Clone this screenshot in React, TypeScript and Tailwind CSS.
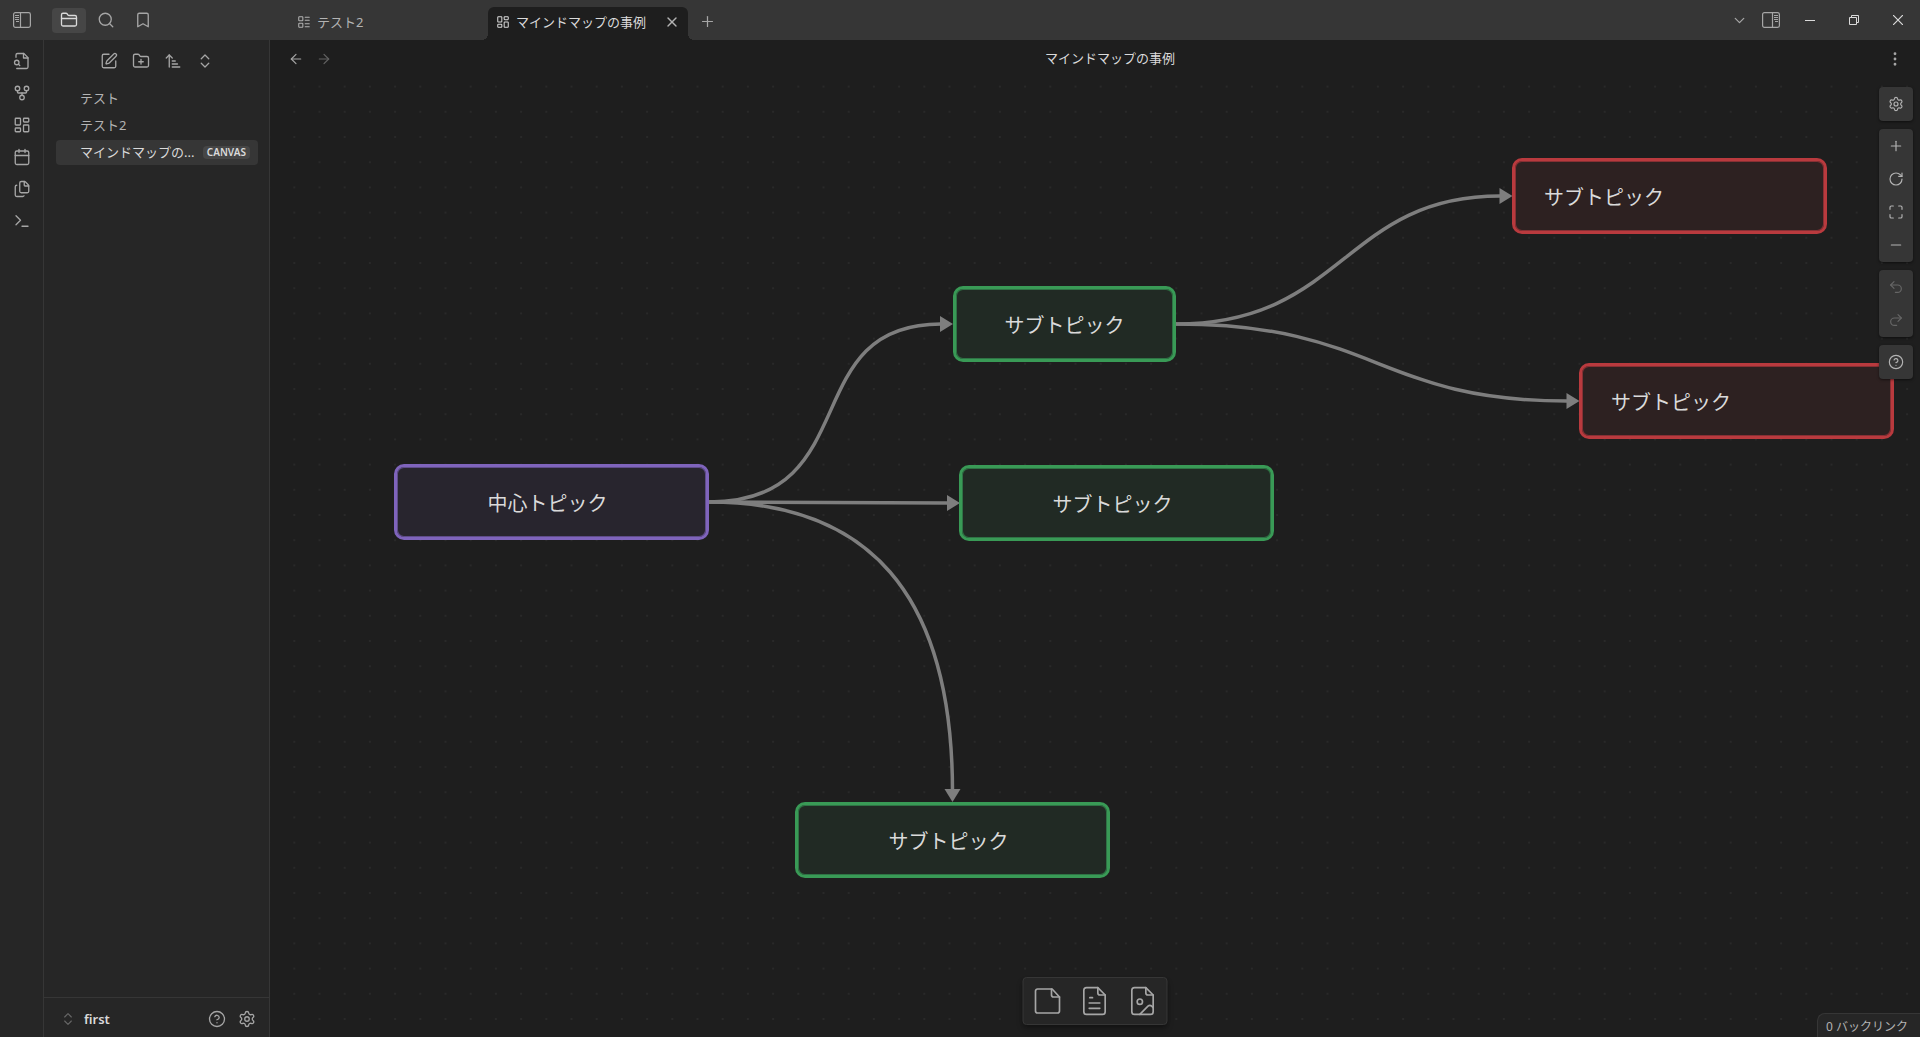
import React from "react";
import {
  ArrowLeft,
  ArrowRight,
  ArrowUpNarrowWide,
  Bookmark,
  Calendar,
  ChevronDown,
  ChevronsUpDown,
  CircleHelp,
  EllipsisVertical,
  Files,
  FolderClosed,
  FolderPlus,
  GitFork,
  LayoutDashboard,
  LayoutList,
  Maximize,
  Minus,
  Plus,
  Redo2,
  RotateCw,
  Search,
  Settings,
  SquarePen,
  Terminal,
  Undo2,
  X,
} from "lucide-react";

const Icon: React.FC<{
  size?: number;
  stroke?: number;
  children: React.ReactNode;
}> = ({ size = 18, stroke = 1.75, children }) => (
  <svg
    width={size}
    height={size}
    viewBox="0 0 24 24"
    fill="none"
    stroke="currentColor"
    strokeWidth={stroke}
    strokeLinecap="round"
    strokeLinejoin="round"
  >
    {children}
  </svg>
);

const SidebarIcon: React.FC<{ side: "left" | "right" }> = ({ side }) => (
  <svg
    width="18"
    height="16"
    viewBox="0 0 18 16"
    fill="none"
    stroke="currentColor"
    strokeWidth="1.2"
  >
    <rect x="0.6" y="0.6" width="16.8" height="14.8" rx="1.8" />
    {side === "left" ? (
      <path d="M7.5 1v14M2 3.5h4M2 5.5h4M2 7.5h4M3 9.5h3" />
    ) : (
      <path d="M10.5 1v14M12 3.5h4M12 5.5h4M12 7.5h4M13 9.5h3" />
    )}
  </svg>
);

const FileSearchIcon = () => (
  <Icon>
    <path d="M4 7V4a2 2 0 0 1 2-2h8.5L20 7.5V20a2 2 0 0 1-2 2H5" />
    <path d="M14 2v6h6" />
    <circle cx="5" cy="14" r="3" />
    <path d="m9 18-1.5-1.5" />
  </Icon>
);

const IconButton: React.FC<{
  label: string;
  className?: string;
  children: React.ReactNode;
}> = ({ label, className = "", children }) => (
  <button
    type="button"
    aria-label={label}
    className={`flex items-center justify-center ${className}`}
  >
    {children}
  </button>
);

const TitleBar = () => (
  <header className="flex h-10 shrink-0 bg-[#363636] text-[#a6a6a6]">
    <div className="flex w-[270px] shrink-0 items-center">
      <IconButton label="サイドバー" className="w-11">
        <SidebarIcon side="left" />
      </IconButton>
      <div className="flex items-center gap-[3px] pl-2">
        <IconButton
          label="ファイル"
          className="h-[25px] w-[34px] rounded bg-[#464646] text-[#dadada]"
        >
          <FolderClosed size={18} strokeWidth={1.75} />
        </IconButton>
        <IconButton label="検索" className="h-[25px] w-[34px]">
          <Search size={18} strokeWidth={1.75} />
        </IconButton>
        <IconButton label="ブックマーク" className="h-[25px] w-[34px]">
          <Bookmark size={18} strokeWidth={1.75} />
        </IconButton>
      </div>
    </div>
    <div className="flex flex-1 items-end">
      <div className="flex h-[33px] w-[218px] items-center gap-1.5 pr-3 pb-1 pl-[27px] text-[#b3b3b3]">
        <LayoutList size={14} strokeWidth={1.75} />
        <span>テスト2</span>
      </div>
      <div className="relative flex h-[33px] w-[200px] items-center gap-1.5 rounded-t-md bg-[#1e1e1e] pr-2 pb-1 pl-2 text-[#dadada]">
        <LayoutDashboard size={14} strokeWidth={1.75} />
        <span className="flex-1 whitespace-nowrap">マインドマップの事例</span>
        <IconButton label="閉じる" className="text-[#b3b3b3]">
          <X size={16} strokeWidth={2} />
        </IconButton>
        <span className="absolute bottom-0 -left-1.5 size-1.5 bg-[radial-gradient(circle_at_0_0,#363636_6px,#1e1e1e_6px)]" />
        <span className="absolute -right-1.5 bottom-0 size-1.5 bg-[radial-gradient(circle_at_100%_0,#363636_6px,#1e1e1e_6px)]" />
      </div>
      <IconButton label="新しいタブ" className="ml-1 h-[38px] w-[30px]">
        <Plus size={17} strokeWidth={1.75} />
      </IconButton>
    </div>
    <div className="flex items-center">
      <IconButton label="タブ一覧" className="w-8">
        <ChevronDown size={17} strokeWidth={1.75} />
      </IconButton>
      <IconButton label="右サイドバー" className="mr-px w-8">
        <SidebarIcon side="right" />
      </IconButton>
      <div className="flex text-[#dadada]">
        <IconButton label="最小化" className="h-10 w-11">
          <svg width="10" height="10" stroke="currentColor">
            <path d="M0 5.5h10" />
          </svg>
        </IconButton>
        <IconButton label="元に戻す" className="h-10 w-11">
          <svg width="10" height="10" fill="none" stroke="currentColor">
            <path d="M.5 2.5h7v7h-7zM2.5 2.5v-2h7v7h-2" />
          </svg>
        </IconButton>
        <IconButton label="ウィンドウを閉じる" className="h-10 w-11">
          <svg width="10" height="10" stroke="currentColor" strokeWidth="1.2">
            <path d="M0 0l10 10M10 0L0 10" />
          </svg>
        </IconButton>
      </div>
    </div>
  </header>
);

const Ribbon = () => (
  <nav className="flex w-11 shrink-0 flex-col items-center gap-[14px] border-r border-[#363636] pt-3 text-[#a6a6a6]">
    <IconButton label="クイックスイッチャー">
      <FileSearchIcon />
    </IconButton>
    <IconButton label="グラフビュー">
      <GitFork size={18} strokeWidth={1.75} />
    </IconButton>
    <IconButton label="キャンバス">
      <LayoutDashboard size={18} strokeWidth={1.75} />
    </IconButton>
    <IconButton label="デイリーノート">
      <Calendar size={18} strokeWidth={1.75} />
    </IconButton>
    <IconButton label="テンプレート">
      <Files size={18} strokeWidth={1.75} />
    </IconButton>
    <IconButton label="コマンドパレット">
      <Terminal size={18} strokeWidth={1.75} />
    </IconButton>
  </nav>
);

const Explorer = () => (
  <aside className="flex w-[226px] shrink-0 flex-col border-r border-[#363636] text-[#b3b3b3]">
    <div className="flex h-[42px] items-center justify-center gap-[14px] text-[#a6a6a6]">
      <IconButton label="新規ノート">
        <SquarePen size={18} strokeWidth={1.75} />
      </IconButton>
      <IconButton label="新規フォルダ">
        <FolderPlus size={18} strokeWidth={1.75} />
      </IconButton>
      <IconButton label="並べ替え">
        <ArrowUpNarrowWide size={18} strokeWidth={1.75} />
      </IconButton>
      <IconButton label="折りたたむ">
        <ChevronsUpDown size={18} strokeWidth={1.75} />
      </IconButton>
    </div>
    <ul className="flex flex-1 flex-col gap-0.5 pt-1 pr-[11px] pl-3">
      <li>
        <a href="#test" className="flex h-[25px] items-center pb-0.5 pl-6">
          テスト
        </a>
      </li>
      <li>
        <a href="#test2" className="flex h-[25px] items-center pb-0.5 pl-6">
          テスト2
        </a>
      </li>
      <li>
        <a
          href="#mindmap"
          className="flex h-[25px] items-center justify-between rounded bg-[#363636] pr-2 pl-6 text-[#dadada]"
        >
          <span className="pb-0.5 whitespace-nowrap">マインドマップの...</span>
          <span className="rounded bg-[#464646] px-1 text-[10px] leading-[13px] font-semibold">
            CANVAS
          </span>
        </a>
      </li>
    </ul>
    <div className="flex h-10 items-center border-t border-[#363636] pt-0.5 pr-[13px] pl-4">
      <button
        type="button"
        className="flex flex-1 items-center gap-2 font-semibold text-[#dadada]"
      >
        <ChevronsUpDown size={16} strokeWidth={1.75} color="#666" />
        first
      </button>
      <div className="flex gap-3 text-[#a6a6a6]">
        <IconButton label="ヘルプ">
          <CircleHelp size={18} strokeWidth={1.75} />
        </IconButton>
        <IconButton label="設定">
          <Settings size={18} strokeWidth={1.75} />
        </IconButton>
      </div>
    </div>
  </aside>
);

const Node: React.FC<{ className: string; children: React.ReactNode }> = ({
  className,
  children,
}) => (
  <div
    className={`absolute flex h-[76px] items-center rounded-[10px] border-[3px] pt-1 text-[20px] leading-[30px] text-[#dadada] ${className}`}
  >
    {children}
  </div>
);

const GREEN =
  "justify-center border-[#399a56] bg-[#212a24] shadow-[inset_0_0_0_1px_#2f7345]";
const RED =
  "w-[315px] border-[#b93a3e] bg-[#2d2121] pl-[29px] shadow-[inset_0_0_0_1px_#873034]";
const PURPLE =
  "w-[315px] justify-center border-[#7f64bc] bg-[#28252e] pr-2 shadow-[inset_0_0_0_1px_#5f4d89]";

const Edges = () => (
  <svg className="absolute inset-0 size-full">
    <defs>
      <pattern
        id="dots"
        x="11.7"
        y="34"
        width="25.2"
        height="25.2"
        patternUnits="userSpaceOnUse"
      >
        <circle cx="12.6" cy="12.6" r="0.8" fill="#363636" />
      </pattern>
    </defs>
    <rect width="100%" height="100%" fill="url(#dots)" />
    <g fill="none" stroke="#7e7e7e" strokeWidth="3.5">
      <path d="M439 462C597 462 525 284 671 284" />
      <path d="M439 462L678 463" />
      <path d="M439 462C597 462 682.500 552 682.500 752" />
      <path d="M906 284C1074 284 1074 156 1230 156" />
      <path d="M906 284C1107 284 1107 361 1297 361" />
    </g>
    <g fill="#7e7e7e">
      <path d="M670 276v16l13-8z" />
      <path d="M677 455v16l13-8z" />
      <path d="M674.500 749h16l-8 13z" />
      <path d="M1229.500 148v16l13-8z" />
      <path d="M1296.500 353v16l13-8z" />
    </g>
  </svg>
);

const Canvas = () => (
  <div className="absolute inset-0">
    <Edges />
    <Node className={`top-[424px] left-[124px] ${PURPLE}`}>中心トピック</Node>
    <Node className={`top-[246px] left-[683px] w-[223px] ${GREEN}`}>
      サブトピック
    </Node>
    <Node className={`top-[425px] left-[689px] w-[315px] pr-2 ${GREEN}`}>
      サブトピック
    </Node>
    <Node className={`top-[762px] left-[525px] w-[315px] pr-2 ${GREEN}`}>
      サブトピック
    </Node>
    <Node className={`top-[118px] left-[1242px] ${RED}`}>サブトピック</Node>
    <Node className={`top-[323px] left-[1309px] ${RED}`}>サブトピック</Node>
  </div>
);

const PANEL = "flex flex-col rounded bg-[#363636] shadow-sm shadow-black/40";

const Controls = () => (
  <div className="absolute top-[47px] right-[7px] flex w-[34px] flex-col gap-2 text-[#b3b3b3]">
    <div className={PANEL}>
      <IconButton label="キャンバス設定" className="h-[34px]">
        <Settings size={16} strokeWidth={1.75} />
      </IconButton>
    </div>
    <div className={`${PANEL} pb-px`}>
      <IconButton label="拡大" className="h-[33px]">
        <Plus size={16} strokeWidth={1.75} />
      </IconButton>
      <IconButton label="リセット" className="h-[33px]">
        <RotateCw size={16} strokeWidth={1.75} />
      </IconButton>
      <IconButton label="全体表示" className="h-[33px]">
        <Maximize size={16} strokeWidth={1.75} />
      </IconButton>
      <IconButton label="縮小" className="h-[33px]">
        <Minus size={16} strokeWidth={1.75} />
      </IconButton>
    </div>
    <div className={`${PANEL} pb-px text-[#666]`}>
      <IconButton label="取り消す" className="h-[33px]">
        <Undo2 size={16} strokeWidth={1.75} />
      </IconButton>
      <IconButton label="やり直す" className="h-[33px]">
        <Redo2 size={16} strokeWidth={1.75} />
      </IconButton>
    </div>
    <div className={PANEL}>
      <IconButton label="キャンバスのヘルプ" className="h-[34px]">
        <CircleHelp size={16} strokeWidth={1.75} />
      </IconButton>
    </div>
  </div>
);

const CardMenu = () => (
  <div className="absolute bottom-3 left-1/2 flex h-12 -translate-x-1/2 items-center rounded border border-[#363636] bg-[#262626] text-[#a6a6a6] shadow-md shadow-black/30">
    <IconButton label="カードを追加" className="w-[47px]">
      <Icon size={32} stroke={1.25}>
        <path d="M15.5 3H4.500A1.500 1.500 0 0 0 3 4.500v15A1.500 1.500 0 0 0 4.500 21h15a1.500 1.500 0 0 0 1.500-1.500V9z" />
        <path d="M15 3v4.500A1.500 1.500 0 0 0 16.500 9H21" />
      </Icon>
    </IconButton>
    <IconButton label="ノートを追加" className="w-12">
      <Icon size={32} stroke={1.25}>
        <path d="M14.500 2H6a2 2 0 0 0-2 2v16a2 2 0 0 0 2 2h12a2 2 0 0 0 2-2V7.500z" />
        <path d="M14.500 2v4a1.500 1.500 0 0 0 1.500 1.500h4M8.500 9.500h2M8 13.500h8M8 17.500h8" />
      </Icon>
    </IconButton>
    <IconButton label="メディアを追加" className="w-12">
      <Icon size={32} stroke={1.25}>
        <path d="M14.500 2H6a2 2 0 0 0-2 2v16a2 2 0 0 0 2 2h12a2 2 0 0 0 2-2V7.500z" />
        <path d="M14.500 2v4a1.500 1.500 0 0 0 1.500 1.500h4" />
        <circle cx="10" cy="12.500" r="2" />
        <path d="m20 17-1.100-1.100a2 2 0 0 0-2.800 0L10 22" />
      </Icon>
    </IconButton>
  </div>
);

const App: React.FC = () => {
  return (
    <div className="flex h-screen w-full flex-col overflow-hidden bg-[#262626] font-['Noto_Sans','Noto_Sans_CJK_JP',sans-serif] text-[13px] leading-5">
      <TitleBar />
      <div className="flex min-h-0 flex-1">
        <Ribbon />
        <Explorer />
        <main className="relative min-w-0 flex-1 overflow-hidden bg-[#1e1e1e]">
          <Canvas />
          <div className="relative flex h-[37px] items-center bg-[#1e1e1e] pr-4 pl-[18px] text-[#a6a6a6]">
            <div className="flex w-27 gap-3">
              <IconButton label="戻る">
                <ArrowLeft size={16} strokeWidth={1.75} />
              </IconButton>
              <IconButton label="進む" className="opacity-50">
                <ArrowRight size={16} strokeWidth={1.75} />
              </IconButton>
            </div>
            <h1 className="flex-1 pb-0.5 text-center text-[#dadada]">
              マインドマップの事例
            </h1>
            <IconButton label="その他" className="w-20 justify-end">
              <EllipsisVertical size={18} strokeWidth={1.75} />
            </IconButton>
          </div>
          <Controls />
          <CardMenu />
          <div className="absolute right-0 bottom-0 flex h-6 items-center rounded-tl-lg border-t border-l border-[#363636] bg-[#262626] pt-[3px] pr-3 pl-2 text-[12px] text-[#b3b3b3]">
            0 バックリンク
          </div>
        </main>
      </div>
    </div>
  );
};

export default App;
